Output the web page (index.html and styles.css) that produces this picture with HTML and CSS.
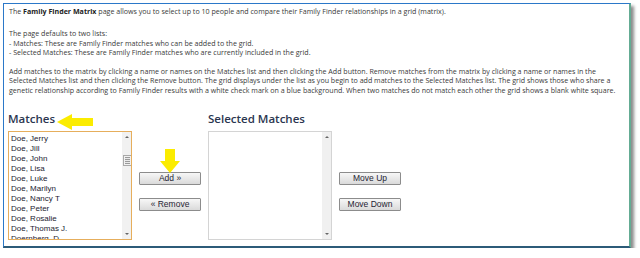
FILE: index.html
```html
<!DOCTYPE html>
<html>
<head>
	<meta charset="utf-8"/>
	<title>Family Finder Matrix</title>
	<link rel="stylesheet" href="styles.css">
</head>
<body>
<div class="shot">
	<div class="intro">
		<p class="first">The <b>Family Finder Matrix</b> page allows you to select up to 10 people and compare their Family Finder relationships in a grid (matrix).</p>
		<p>The page defaults to two lists:<br>- Matches: These are Family Finder matches who can be added to the grid.<br>- Selected Matches: These are Family Finder matches who are currently included in the grid.</p>
		<p>Add matches to the matrix by clicking a name or names on the Matches list and then clicking the Add button. Remove matches from the matrix by clicking a name or names in the Selected Matches list and then clicking the Remove button. The grid displays under the list as you begin to add matches to the Selected Matches list. The grid shows those who share a genetic relationship according to Family Finder results with a white check mark on a blue background. When two matches do not match each other the grid shows a blank white square.</p>
	</div>
	<div class="lists">
		<div class="col">
			<h2>Matches</h2>
			<div class="listbox matches">
				<ul>
					<li>Doe, Jerry</li>
					<li>Doe, Jill</li>
					<li>Doe, John</li>
					<li>Doe, Lisa</li>
					<li>Doe, Luke</li>
					<li>Doe, Marilyn</li>
					<li>Doe, Nancy T</li>
					<li>Doe, Peter</li>
					<li>Doe, Rosalie</li>
					<li>Doe, Thomas J.</li>
					<li>Doernberg, D</li>
				</ul>
				<div class="sbar">
					<span class="up"></span>
					<span class="thumb"></span>
					<span class="down"></span>
				</div>
			</div>
		</div>
		<div class="btns">
			<button>Add &raquo;</button>
			<button>&laquo; Remove</button>
		</div>
		<div class="col">
			<h2>Selected Matches</h2>
			<div class="listbox selected">
				<ul></ul>
				<div class="sbar">
					<span class="up"></span>
					<span class="down"></span>
				</div>
			</div>
		</div>
		<div class="btns">
			<button>Move Up</button>
			<button>Move Down</button>
		</div>
	</div>
	<svg class="arrow arrow-left" width="38" height="18" viewBox="0 0 38 18">
		<polygon points="0,9 15,1 15,5 36,5 36,13 15,13 15,17" fill="#fbec00"/>
	</svg>
	<svg class="arrow arrow-down" width="22" height="25" viewBox="0 0 22 25">
		<polygon points="6,0 16,0 16,12 21,12 11,24 1,12 6,12" fill="#fbec00"/>
	</svg>
</div>
</body>
</html>
```

FILE: styles.css
```css
/* =====reset===== */
body, div, p, h2, ul, li { padding: 0; margin: 0; }
ul { list-style: none; }

/* =====frame===== */
body { background: #fff; }
.shot { position: relative; box-sizing: border-box; width: 628px; height: 245px; margin: 3px 0 0 3px; padding: 3px 4px 0 4px; background: #fff; border-top: 1px solid #2b78c9; border-left: 1px solid #2b78c9; border-right: 2px solid #64ac94; border-bottom: 2px solid #2c5b78; box-shadow: 3px 3px 3px rgba(0,0,0,.45); }

/* =====intro text===== */
.intro { padding-left: 1px; font-family: "Open Sans", sans-serif; font-size: 7.1px; line-height: 9.4px; color: #3a3a3a; }
.intro p { margin-bottom: 9.4px; }
.intro p.first { margin-bottom: 13px; }
.intro b { font-weight: 700; color: #222; }

/* =====lists===== */
.lists { display: flex; gap: 7px; margin-top: 17px; }
.col h2 { height: 14px; margin-bottom: 5px; font-family: "Open Sans", sans-serif; font-size: 11.5px; line-height: 14px; font-weight: 600; color: #2b3650; }
.listbox { display: flex; box-sizing: border-box; width: 124px; height: 109px; overflow: hidden; background: #fff; }
.listbox ul { flex: 1; padding: 2px 0 0 2px; font-family: "Liberation Sans", Arial, sans-serif; font-size: 8px; line-height: 10px; color: #1d2230; }
.matches { border: 1px solid #e6ae5c; }
.selected { border: 1px solid #d4d4d4; }

.sbar { position: relative; width: 9px; background: #f1f1f1; }
.selected .sbar { width: 9px; background: #f0f0f0; }
.sbar .up, .sbar .down { position: absolute; left: 3px; width: 0; height: 0; border-left: 2px solid transparent; border-right: 2px solid transparent; }
.sbar .up { top: 4px; border-bottom: 2px solid #666; }
.sbar .down { bottom: 4px; border-top: 2px solid #666; }
.sbar .thumb { position: absolute; top: 23px; left: 1px; width: 5px; height: 7px; border: 1px solid #a9a9a9; background: repeating-linear-gradient(#e9e9e9 0 1px, #9a9a9a 1px 2px); background-clip: content-box; padding: 1px; }

/* =====buttons===== */
.btns { display: flex; flex-direction: column; gap: 13px; padding-top: 60px; }
.btns button { width: 62px; height: 13px; padding: 0; border: 1px solid #8c8c8c; border-radius: 1px; background: linear-gradient(#f7f7f7, #dadada); font-family: "Liberation Sans", Arial, sans-serif; font-size: 8.5px; line-height: 11px; color: #1f2433; }

/* =====annotations===== */
.arrow { position: absolute; }
.arrow-left { left: 53px; top: 109px; }
.arrow-down { left: 155px; top: 145px; }
```
